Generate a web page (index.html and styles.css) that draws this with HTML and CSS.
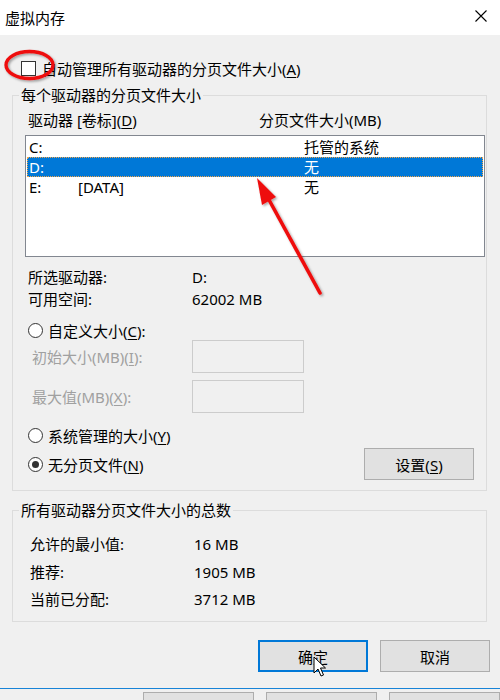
FILE: index.html
```html
<!DOCTYPE html>
<html lang="zh-CN">
<head>
  <meta charset="UTF-8">
  <title>虚拟内存</title>
  <link rel="stylesheet" href="styles.css">
</head>
<body>

  <div class="window">
    <div class="titlebar">
      <span class="title">虚拟内存</span>
      <svg class="close" width="12" height="12" viewBox="0 0 12 12">
        <path d="M0.5 0.5 L11.5 11.5 M11.5 0.5 L0.5 11.5" stroke="#000" stroke-width="1.1" fill="none" />
      </svg>
    </div>

    <div class="dialog">
      <div class="auto-row">
        <span class="checkbox"></span>
        <span>自动管理所有驱动器的分页文件大小(<u>A</u>)</span>
      </div>

      <div class="group">
        <div class="group-title">每个驱动器的分页文件大小</div>
        <div class="headers">
          <span>驱动器 [卷标](<u>D</u>)</span>
          <span>分页文件大小(MB)</span>
        </div>
        <div class="drive-list">
          <div class="drive-row">
            <span>C:</span><span></span><span>托管的系统</span>
          </div>
          <div class="drive-row selected">
            <span>D:</span><span></span><span>无</span>
          </div>
          <div class="drive-row">
            <span>E:</span><span>[DATA]</span><span>无</span>
          </div>
        </div>

        <div class="info">
          <div class="info-row"><span>所选驱动器:</span><span>D:</span></div>
          <div class="info-row"><span>可用空间:</span><span>62002 MB</span></div>
        </div>

        <div class="radio-row custom">
          <span class="radio"></span>
          <span>自定义大小(<u>C</u>):</span>
        </div>
        <div class="size-row">
          <span class="disabled">初始大小(MB)(<u>I</u>):</span>
          <span class="size-input"></span>
        </div>
        <div class="size-row second">
          <span class="disabled">最大值(MB)(<u>X</u>):</span>
          <span class="size-input"></span>
        </div>
        <div class="radio-row system">
          <span class="radio"></span>
          <span>系统管理的大小(<u>Y</u>)</span>
        </div>
        <div class="last-row">
          <div class="radio-row">
            <span class="radio checked"></span>
            <span>无分页文件(<u>N</u>)</span>
          </div>
          <button class="btn set-btn">设置(<u>S</u>)</button>
        </div>
      </div>

      <div class="group total">
        <div class="group-title">所有驱动器分页文件大小的总数</div>
        <div class="total-rows">
          <div class="total-row"><span>允许的最小值:</span><span>16 MB</span></div>
          <div class="total-row"><span>推荐:</span><span>1905 MB</span></div>
          <div class="total-row"><span>当前已分配:</span><span>3712 MB</span></div>
        </div>
      </div>

      <div class="footer">
        <button class="btn ok-btn">确定</button>
        <button class="btn">取消</button>
      </div>
    </div>

    <div class="behind">
      <span class="behind-btn"></span>
      <span class="behind-btn"></span>
      <span class="behind-btn"></span>
    </div>

    <!-- annotations drawn over the screenshot -->
    <svg class="overlay" width="500" height="700" viewBox="0 0 500 700">
      <defs>
        <filter id="shadow" x="-20%" y="-20%" width="140%" height="140%">
          <feDropShadow dx="1.5" dy="1.5" stdDeviation="1.2" flood-color="#000" flood-opacity="0.35" />
        </filter>
      </defs>
      <ellipse cx="29.5" cy="65" rx="23.5" ry="13.5" fill="none" stroke="#ee1111" stroke-width="3.4" filter="url(#shadow)" />
      <g filter="url(#shadow)" fill="#ee1111">
        <path d="M320 293 L268 198" stroke="#ee1111" stroke-width="3.6" stroke-linecap="round" />
        <path d="M257 178 L276 197 L262 205 Z" />
      </g>
      <path d="M314 657 L314 673 L318 669 L321 676 L323.5 675 L320.5 668 L325.5 668 Z" fill="#fff" stroke="#000" stroke-width="1" stroke-linejoin="round" />
    </svg>
  </div>

</body>
</html>
```

FILE: styles.css
```css
body {
  margin: 0;
  font-family: 'Noto Sans', 'Noto Sans CJK SC', sans-serif;
  font-size: 15px;
  color: #000;
}

.window {
  position: relative;
  width: 500px;
  height: 700px;
  background: #f0f0f0;
  overflow: hidden;
}

.titlebar {
  height: 35px;
  background: #fff;
  display: flex;
  align-items: center;
  justify-content: space-between;
  padding: 0 13px 0 5px;
  line-height: 20px;
}

.close {
  margin-top: -3px;
}

.dialog {
  padding: 0 13px 0 12px;
}

u {
  text-decoration-thickness: 1px;
  text-underline-offset: 2px;
}

.auto-row {
  display: flex;
  align-items: center;
  height: 20px;
  margin-top: 23px;
  padding-left: 9px;
}

.checkbox {
  width: 13px;
  height: 13px;
  border: 1px solid #333;
  background: #fff;
  margin-right: 6px;
}

.group {
  margin-top: 17px;
  border: 1px solid #dcdcdc;
  padding: 0 1px 10px 12px;
}

.group-title {
  display: table;
  margin: -11px 0 0 -6px;
  padding: 0 2px;
  background: #f0f0f0;
  line-height: 20px;
}

.headers {
  display: grid;
  grid-template-columns: 231px auto;
  margin-top: 5px;
  padding-left: 3px;
  line-height: 20px;
}

.drive-list {
  margin-top: 5px;
  border: 1px solid #828790;
  background: #fff;
  padding: 1px;
  height: 118px;
}

.drive-row {
  display: grid;
  grid-template-columns: 49px 226px auto;
  height: 20px;
  line-height: 20px;
  padding-left: 2px;
}

.drive-row.selected {
  background: #0078d7;
  color: #fff;
  outline: 1px dotted #f3a64b;
  outline-offset: -1px;
}

.info {
  margin-top: 10px;
}

.info-row {
  display: grid;
  grid-template-columns: 164px auto;
  padding-left: 3px;
  line-height: 20px;
}

.info-row + .info-row {
  margin-top: 2px;
}

.radio-row {
  display: flex;
  align-items: center;
  height: 20px;
  padding-left: 3px;
}

.radio {
  width: 13px;
  height: 13px;
  border: 1px solid #333;
  border-radius: 50%;
  background: #fff;
  margin-right: 5px;
  display: flex;
  align-items: center;
  justify-content: center;
}

.radio.checked::after {
  content: '';
  width: 7px;
  height: 7px;
  border-radius: 50%;
  background: #333;
}

.radio-row.custom {
  margin-top: 11px;
}

.size-row {
  display: grid;
  grid-template-columns: 160px 112px;
  align-items: center;
  padding-left: 7px;
}

.size-row.second {
  margin-top: 7px;
}

.disabled {
  color: #a0a0a0;
}

.size-input {
  height: 31px;
  border: 1px solid #cccccc;
  background: #f0f0f0;
}

.radio-row.system {
  margin-top: 12px;
}

.last-row {
  display: flex;
  align-items: center;
  justify-content: space-between;
  margin-top: 3px;
  padding-right: 11px;
}

.btn {
  width: 110px;
  height: 32px;
  border: 1px solid #adadad;
  background: #e1e1e1;
  font-family: inherit;
  font-size: 15px;
  color: #000;
  padding: 0;
}

.group.total {
  margin-top: 19px;
  padding-bottom: 12px;
}

.total-rows {
  margin-top: 14px;
}

.total-row {
  display: grid;
  grid-template-columns: 164px auto;
  padding-left: 5px;
  line-height: 20px;
}

.total-row + .total-row {
  margin-top: 7px;
}

.total-row:nth-child(2) {
  margin-top: 8px;
}

.footer {
  display: flex;
  justify-content: flex-end;
  gap: 12px;
  margin-top: 18px;
  margin-right: -3px;
}

.ok-btn {
  border: 2px solid #0078d7;
}

.behind {
  margin-top: 16px;
  border-top: 1px solid #1883d7;
  display: flex;
  gap: 12px;
  padding: 3px 0 0 143px;
}

.behind-btn {
  width: 109px;
  height: 20px;
  border: 1px solid #adadad;
  background: #e1e1e1;
}

.overlay {
  position: absolute;
  left: 0;
  top: 0;
  pointer-events: none;
}
```
